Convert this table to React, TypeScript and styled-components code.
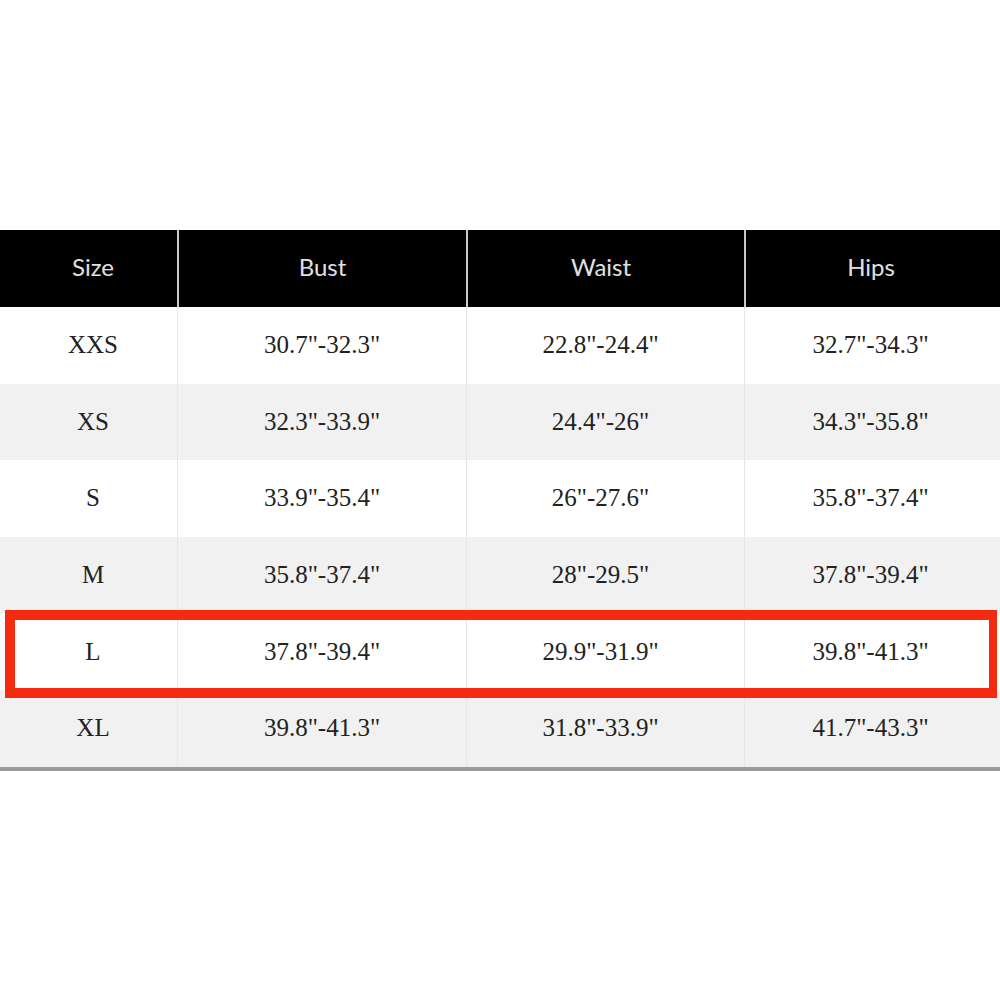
import React from "react";
import styled, { createGlobalStyle } from "styled-components";

const GlobalStyle = createGlobalStyle`
  body {
    margin: 0;
    background: #fff;
  }
`;

type Row = { size: string; bust: string; waist: string; hips: string };

const rows: Row[] = [
  { size: "XXS", bust: '30.7"-32.3"', waist: '22.8"-24.4"', hips: '32.7"-34.3"' },
  { size: "XS", bust: '32.3"-33.9"', waist: '24.4"-26"', hips: '34.3"-35.8"' },
  { size: "S", bust: '33.9"-35.4"', waist: '26"-27.6"', hips: '35.8"-37.4"' },
  { size: "M", bust: '35.8"-37.4"', waist: '28"-29.5"', hips: '37.8"-39.4"' },
  { size: "L", bust: '37.8"-39.4"', waist: '29.9"-31.9"', hips: '39.8"-41.3"' },
  { size: "XL", bust: '39.8"-41.3"', waist: '31.8"-33.9"', hips: '41.7"-43.3"' },
];

const highlighted = "L";

const App: React.FC = () => {
  return (
    <Page>
      <GlobalStyle />
      <Table>
        <HeaderRow>
          <HeadCell>Size</HeadCell>
          <HeadCell>Bust</HeadCell>
          <HeadCell>Waist</HeadCell>
          <HeadCell>Hips</HeadCell>
        </HeaderRow>
        {rows.map((r, i) => (
          <BodyRow key={r.size} $shaded={i % 2 === 1}>
            <Cell>{r.size}</Cell>
            <Cell>{r.bust}</Cell>
            <Cell>{r.waist}</Cell>
            <Cell>{r.hips}</Cell>
            {r.size === highlighted && <Highlight />}
          </BodyRow>
        ))}
      </Table>
    </Page>
  );
};

const Page = styled.div`
  width: 1000px;
  height: 1000px;
  padding-top: 230px;
  box-sizing: border-box;
`;

const Table = styled.div`
  display: flex;
  flex-direction: column;
  border-bottom: 4px solid #9b9b9b;
`;

const columns = `
  display: grid;
  grid-template-columns: 177px 289px 278px 256px;
  & > :nth-child(1) { padding-left: 9px; }
  & > :nth-child(3) { padding-right: 10px; }
  & > :nth-child(4) { padding-right: 4px; }
`;

const HeaderRow = styled.div`
  ${columns}
  height: 77px;
  background: #000;
`;

const HeadCell = styled.div`
  display: flex;
  align-items: center;
  justify-content: center;
  padding-bottom: 4px;
  font-family: Lato, "Open Sans", sans-serif;
  font-size: 24px;
  color: #e0e0e0;
  & + & {
    border-left: 2px solid #c8c8c8;
  }
`;

const BodyRow = styled.div<{ $shaded: boolean }>`
  ${columns}
  position: relative;
  height: 76.6px;
  background: ${(p) => (p.$shaded ? "#f1f1f1" : "#fff")};
`;

const Cell = styled.div`
  display: flex;
  align-items: center;
  justify-content: center;
  font-family: "Liberation Serif", "Times New Roman", serif;
  font-size: 25px;
  color: #222;
  & + & {
    border-left: 1px solid #e6e6e6;
  }
`;

const Highlight = styled.div`
  position: absolute;
  z-index: 2;
  left: 5px;
  top: -3px;
  width: 992px;
  height: 88px;
  box-sizing: border-box;
  border: 10px solid #f42b10;
  border-right-width: 8px;
  pointer-events: none;
`;

export default App;
